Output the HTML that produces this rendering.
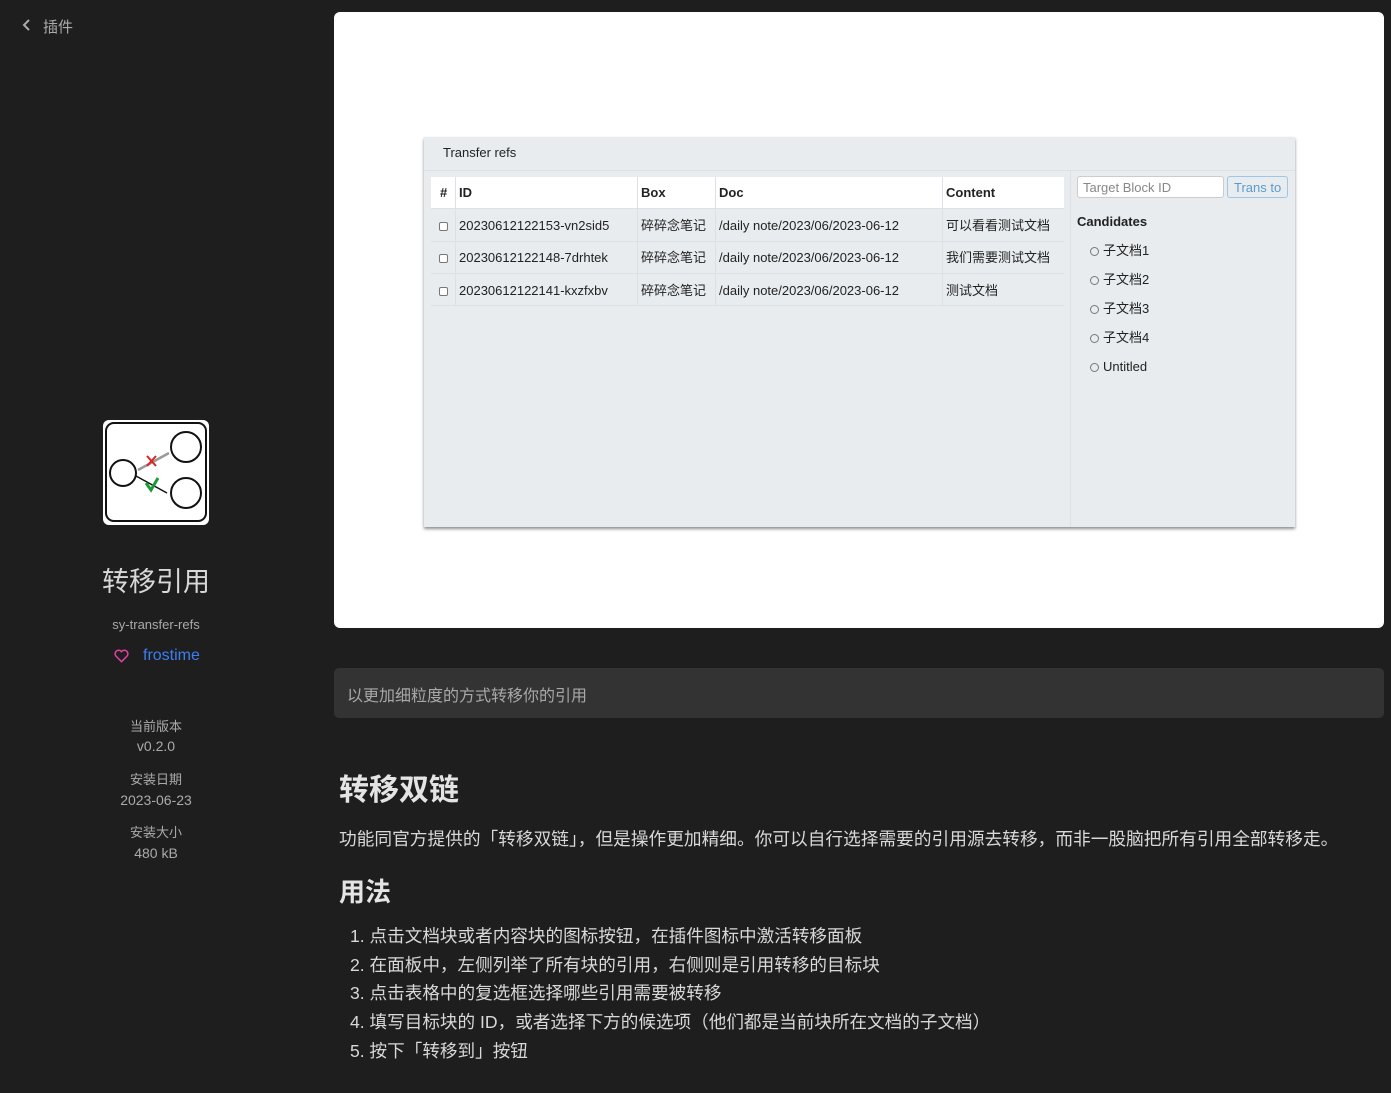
<!DOCTYPE html>
<html><head><meta charset="utf-8"><style>
*{margin:0;padding:0;box-sizing:border-box}
body{width:1391px;height:1093px;background:#1e1e1e;font-family:"Liberation Sans","Noto Sans CJK SC",sans-serif;position:relative;overflow:hidden;color:#d4d4d4}
.a{position:absolute;white-space:nowrap}
.c{text-align:center;width:312px;left:0}
.shot{position:absolute;left:424px;top:137px;width:871px;height:390px;background:#e9ecef;box-shadow:0 2px 3px rgba(0,0,0,.45);color:#222;font-size:13px}
.shot .a{line-height:16px}
.row{position:absolute;left:7px;width:633px;height:32px;border-top:1px solid #dde1e5}
.vl{position:absolute;top:40px;height:129px;width:1px;background:#dde1e5}
.cb{position:absolute;left:8px;width:9px;height:9px;border:1px solid #777;border-radius:2px;background:#fff}
.rd{position:absolute;left:666px;width:9px;height:9px;border:1px solid #777;border-radius:50%}
</style></head><body>
<svg class="a" style="left:21px;top:18px" width="12" height="14" viewBox="0 0 12 14"><path d="M8 2 L3 7 L8 12" fill="none" stroke="#aaa" stroke-width="2"/></svg>
<div class="a" style="left:43px;top:16px;font-size:15px;color:#aaa">插件</div>

<div class="a" style="left:103px;top:420px;width:106px;height:105px;background:#fff;border-radius:6px">
<svg width="106" height="105" viewBox="0 0 106 105"><rect x="3" y="3" width="100" height="98" rx="8" fill="none" stroke="#111" stroke-width="2"/>
<circle cx="20" cy="53" r="13" fill="none" stroke="#111" stroke-width="2"/><circle cx="83" cy="27" r="15" fill="none" stroke="#111" stroke-width="2"/><circle cx="83" cy="73" r="15" fill="none" stroke="#111" stroke-width="2"/>
<path d="M35 50 L66 33" stroke="#999" stroke-width="2.5"/><path d="M33 56 L64 73" stroke="#111" stroke-width="1.5"/>
<path d="M44 36 L53 46 M53 36 L44 46" stroke="#d22" stroke-width="2"/><path d="M43 63 L48 70 L55 58" fill="none" stroke="#1a9a3a" stroke-width="3"/></svg></div>
<div class="a c" style="top:560px;font-size:27px;color:#d8d8d8">转移引用</div>
<div class="a c" style="top:617px;font-size:13px;color:#aaa">sy-transfer-refs</div>
<svg class="a" style="left:114px;top:649px" width="15" height="14" viewBox="0 0 24 22"><path d="M12 20 L3 11 A5 5 0 0 1 12 4 A5 5 0 0 1 21 11 Z" fill="none" stroke="#e040a0" stroke-width="2.5"/></svg>
<div class="a" style="left:143px;top:647px;font-size:16px;color:#3b7ff0">frostime</div>
<div class="a c" style="top:716px;font-size:13px;color:#aaa">当前版本</div>
<div class="a c" style="top:738px;font-size:14px;color:#aaa">v0.2.0</div>
<div class="a c" style="top:769px;font-size:13px;color:#aaa">安装日期</div>
<div class="a c" style="top:792px;font-size:14px;color:#aaa">2023-06-23</div>
<div class="a c" style="top:822px;font-size:13px;color:#aaa">安装大小</div>
<div class="a c" style="top:845px;font-size:14px;color:#aaa">480 kB</div>

<div class="a" style="left:334px;top:12px;width:1050px;height:616px;background:#fff;border-radius:6px"></div>
<div class="shot">
<div class="a" style="left:19px;top:8px">Transfer refs</div>
<div class="a" style="left:0;top:33px;width:871px;height:1px;background:#dde1e5"></div>
<div class="a" style="left:646px;top:33px;width:1px;height:357px;background:#dde1e5"></div>
<div class="a" style="left:7px;top:40px;width:633px;height:31px;background:#fff"></div>
<div class="a" style="left:16px;top:48px;font-weight:bold">#</div>
<div class="a" style="left:35px;top:48px;font-weight:bold">ID</div>
<div class="a" style="left:217px;top:48px;font-weight:bold">Box</div>
<div class="a" style="left:295px;top:48px;font-weight:bold">Doc</div>
<div class="a" style="left:522px;top:48px;font-weight:bold">Content</div>
<div class="row" style="top:71px"></div><div class="row" style="top:104px"></div><div class="row" style="top:136px;height:33px;border-bottom:1px solid #dde1e5"></div>
<div class="vl" style="left:31px"></div><div class="vl" style="left:213px"></div><div class="vl" style="left:291px"></div><div class="vl" style="left:518px"></div>
<div class="cb" style="top:85px;left:15px"></div><div class="cb" style="top:117px;left:15px"></div><div class="cb" style="top:150px;left:15px"></div>
<div class="a" style="left:35px;top:81px">20230612122153-vn2sid5</div><div class="a" style="left:217px;top:81px">碎碎念笔记</div><div class="a" style="left:295px;top:81px">/daily note/2023/06/2023-06-12</div><div class="a" style="left:522px;top:81px">可以看看测试文档</div>
<div class="a" style="left:35px;top:113px">20230612122148-7drhtek</div><div class="a" style="left:217px;top:113px">碎碎念笔记</div><div class="a" style="left:295px;top:113px">/daily note/2023/06/2023-06-12</div><div class="a" style="left:522px;top:113px">我们需要测试文档</div>
<div class="a" style="left:35px;top:146px">20230612122141-kxzfxbv</div><div class="a" style="left:217px;top:146px">碎碎念笔记</div><div class="a" style="left:295px;top:146px">/daily note/2023/06/2023-06-12</div><div class="a" style="left:522px;top:146px">测试文档</div>
<div class="a" style="left:653px;top:39px;width:147px;height:22px;background:#fff;border:1px solid #ccc;border-radius:3px;color:#888;padding:3px 5px">Target Block ID</div>
<div class="a" style="left:803px;top:39px;width:61px;height:22px;border:1px solid #9cc7e6;border-radius:3px;color:#5a9ad0;padding:3px 6px">Trans to</div>
<div class="a" style="left:653px;top:77px;font-weight:bold">Candidates</div>
<div class="rd" style="top:110px"></div><div class="a" style="left:679px;top:106px">子文档1</div>
<div class="rd" style="top:139px"></div><div class="a" style="left:679px;top:135px">子文档2</div>
<div class="rd" style="top:168px"></div><div class="a" style="left:679px;top:164px">子文档3</div>
<div class="rd" style="top:197px"></div><div class="a" style="left:679px;top:193px">子文档4</div>
<div class="rd" style="top:226px"></div><div class="a" style="left:679px;top:222px">Untitled</div>
</div>

<div class="a" style="left:334px;top:668px;width:1050px;height:50px;background:#333;border-radius:5px;padding:14px 13px;font-size:16px;color:#a8a8a8">以更加细粒度的方式转移你的引用</div>
<div class="a" style="left:339px;top:765px;font-size:30px;font-weight:bold;color:#e4e4e4">转移双链</div>
<div class="a" style="left:339px;top:825px;font-size:17.7px;color:#d8d8d8">功能同官方提供的「转移双链」，但是操作更加精细。你可以自行选择需要的引用源去转移，而非一股脑把所有引用全部转移走。</div>
<div class="a" style="left:339px;top:872px;font-size:26px;font-weight:bold;color:#e4e4e4">用法</div>
<div class="a" style="left:350px;top:922px;font-size:17.6px;color:#d8d8d8;line-height:28.7px">1. 点击文档块或者内容块的图标按钮，在插件图标中激活转移面板<br>2. 在面板中，左侧列举了所有块的引用，右侧则是引用转移的目标块<br>3. 点击表格中的复选框选择哪些引用需要被转移<br>4. 填写目标块的 ID，或者选择下方的候选项（他们都是当前块所在文档的子文档）<br>5. 按下「转移到」按钮</div>
</body></html>
